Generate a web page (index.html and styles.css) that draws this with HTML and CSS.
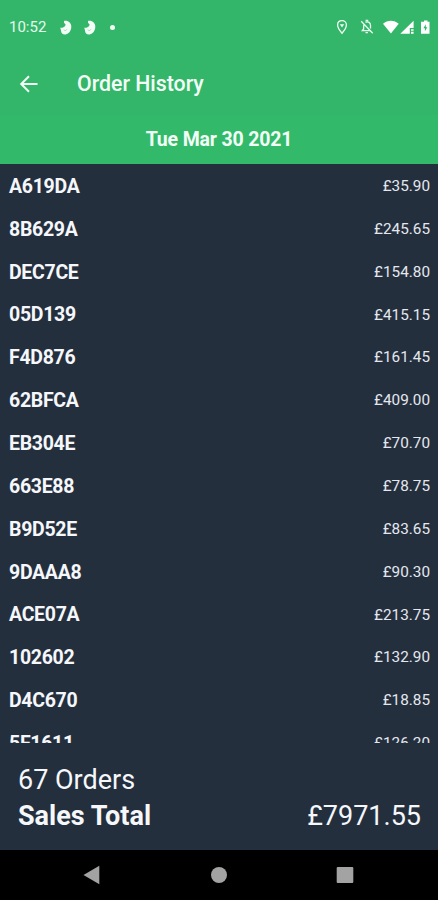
FILE: index.html
```html
<!DOCTYPE html>
<html lang="en">
<head>
<meta charset="utf-8">
<title>Order History</title>
<link rel="stylesheet" href="styles.css">
</head>
<body>
<div class="screen">
  <header class="status">
    <span class="clock">10:52</span>
    <svg class="bird" viewBox="0 0 12 15"><path d="M4 1C8 .2 11.500 3 11.300 7c-.2 4-2.800 7.300-6.200 7.500-2.500.1-3.900-1.300-4-3.500L.3 7.700l2.300.1L5 6.200 5.600 4.400 4 2.700z" fill="#f3fff6"/><path d="M3.600 9.700l1.600 1 2-1.400" fill="none" stroke="#34b66a" stroke-width=".4"/></svg>
    <svg class="bird" viewBox="0 0 12 15"><path d="M4 1C8 .2 11.500 3 11.300 7c-.2 4-2.800 7.300-6.200 7.500-2.500.1-3.900-1.300-4-3.500L.3 7.700l2.300.1L5 6.200 5.600 4.400 4 2.700z" fill="#f3fff6"/><path d="M3.600 9.700l1.600 1 2-1.400" fill="none" stroke="#34b66a" stroke-width=".4"/></svg>
    <span class="dot"></span>
    <svg class="tray" viewBox="0 0 98 20">
      <path d="M7 3.700c-2.600 0-4.400 1.900-4.400 4.400C2.600 11.300 7 16.300 7 16.300s4.400-5 4.400-8.200c0-2.500-1.800-4.400-4.400-4.400z" fill="none" stroke="#f0fff4" stroke-width="1.300"/>
      <path d="M4.800 7.300h4.400L7 10.400z" fill="#f0fff4"/>
      <g fill="none" stroke="#e9fbef" stroke-width="1.300"><path d="M26.200 4.300l11.500 12M29 7.500c-.5 1.200-.4 3-.4 4.500l-1.300 1.700h7.500M30.500 5.400c2.800-1.400 5 .3 5 3.100v3"/><path d="M31.200 4.500V3.300h1.400v1.200M30.500 15.600h2.400"/></g>
      <path d="M48 6.700c4.500-3.900 11.200-3.900 15.700 0L55.900 16.500z" fill="#fff"/>
      <path d="M65.300 16.700L78.600 3.700v7.300h-3.800v5.700z" fill="#fff"/>
      <path d="M76 12.200h2.600v1.600H76zM76 14.800h2.600v1.900H76z" fill="#fff"/>
      <path d="M88 4.800h1V3.500h3.500v1.300h2v12H86V4.800z" fill="#fff"/>
      <path d="M90.800 7.300l-2.400 4h1.500v3l2.400-4h-1.500z" fill="#34b66a"/>
    </svg>
  </header>
  <nav class="appbar">
    <svg class="back" viewBox="0 0 20 20"><path d="M18.500 10H2.500M10 2.200L2.200 10l7.800 7.800" fill="none" stroke="#f3fff6" stroke-width="2"/></svg>
    <h1>Order History</h1>
  </nav>
  <h2 class="date">Tue Mar 30 2021</h2>
  <main class="orders">
    <div class="row"><b>A619DA</b><span>£35.90</span></div>
    <div class="row"><b>8B629A</b><span>£245.65</span></div>
    <div class="row"><b>DEC7CE</b><span>£154.80</span></div>
    <div class="row"><b>05D139</b><span>£415.15</span></div>
    <div class="row"><b>F4D876</b><span>£161.45</span></div>
    <div class="row"><b>62BFCA</b><span>£409.00</span></div>
    <div class="row"><b>EB304E</b><span>£70.70</span></div>
    <div class="row"><b>663E88</b><span>£78.75</span></div>
    <div class="row"><b>B9D52E</b><span>£83.65</span></div>
    <div class="row"><b>9DAAA8</b><span>£90.30</span></div>
    <div class="row"><b>ACE07A</b><span>£213.75</span></div>
    <div class="row"><b>102602</b><span>£132.90</span></div>
    <div class="row"><b>D4C670</b><span>£18.85</span></div>
    <div class="row"><b>5F1611</b><span>£126.20</span></div>
  </main>
  <section class="summary">
    <div class="count">67 Orders</div>
    <div class="total"><b>Sales Total</b><span>£7971.55</span></div>
  </section>
  <footer class="navbar">
    <svg viewBox="0 0 20 20"><path d="M17.300 .8v18.400L1.500 10z" fill="#a3a3a3"/></svg>
    <svg viewBox="0 0 20 20"><circle cx="10" cy="10" r="8" fill="#a3a3a3"/></svg>
    <svg viewBox="0 0 20 20"><rect x="1.700" y="1.900" width="16.600" height="16.200" rx="1" fill="#a3a3a3"/></svg>
  </footer>
</div>
</body>
</html>
```
FILE: styles.css
```css
* { box-sizing: border-box; }
body { margin: 0; font-family: Roboto, "Liberation Sans", sans-serif; color: #f5f7fa; }
.screen { width: 438px; height: 900px; display: flex; flex-direction: column; overflow: hidden; background: #242f3e; }
.status { height: 54px; flex: none; display: flex; align-items: center; padding: 0 5px 0 9px; background: #34b66a; }
.clock { width: 51px; font-size: 15px; color: #e6faec; }
.bird { width: 12px; height: 15px; margin-right: 12px; }
.dot { width: 5px; height: 5px; margin-left: 2px; border-radius: 50%; background: #f0fff4; }
.tray { width: 98px; height: 20px; margin-left: auto; }
.appbar { height: 61px; flex: none; display: flex; align-items: center; padding: 0 0 2px 18.600px; background: #34b66a; }
.back { width: 20px; height: 20px; }
.appbar h1 { margin: 0 0 0 38.400px; font-size: 21.300px; font-weight: 500; color: #f3fff6; }
.date { height: 49px; flex: none; margin: 0; line-height: 49px; text-align: center; font-size: 19.500px; letter-spacing: -0.160px; font-weight: 700; color: #f3fff6; background: #32ba6a; }
.orders { height: 579px; flex: none; overflow: hidden; padding-top: 0.600px; }
.row { height: 42.870px; display: flex; align-items: center; justify-content: space-between; padding: 0 8px 0 9px; }
.row b { padding-top: 1.600px; font-size: 19.500px; letter-spacing: -0.300px; line-height: 22px; }
.row span { font-size: 15.300px; color: #e4e8ee; }
.summary { height: 107px; flex: none; padding: 19px 17px 0 18px; font-size: 27px; line-height: 36px; }
.total { display: flex; justify-content: space-between; }
.navbar { flex: 1; display: flex; align-items: center; justify-content: space-between; padding: 0 83px 0 82px; background: #000; }
.navbar svg { width: 20px; height: 20px; }
```
